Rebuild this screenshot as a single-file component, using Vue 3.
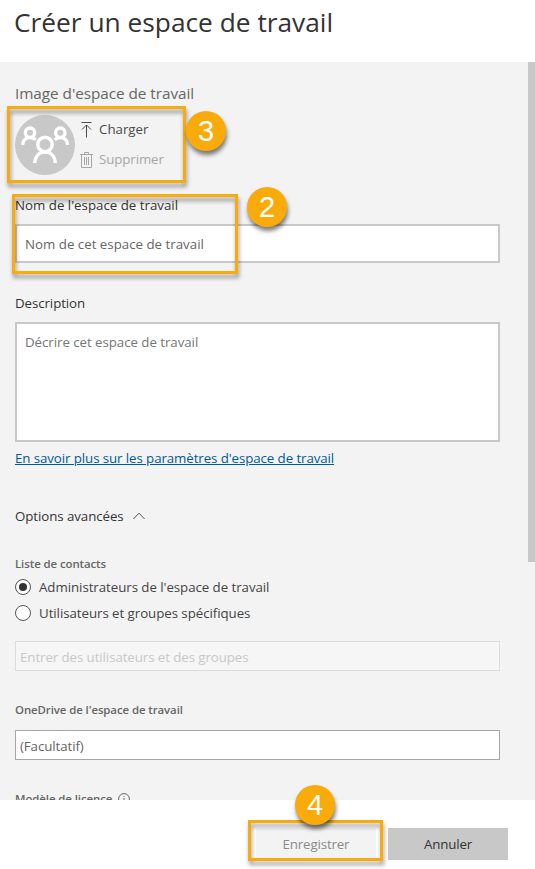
<script setup>
import { ref } from 'vue'

const contacts = ref('admins')
const contactOptions = [
  { value: 'admins', label: "Administrateurs de l'espace de travail" },
  { value: 'specific', label: 'Utilisateurs et groupes spécifiques' },
]
</script>

<template>
  <div class="dialog">
    <header class="header">
      <h1>Créer un espace de travail</h1>
    </header>

    <main class="body">
      <h2 class="section-title">Image d'espace de travail</h2>
      <div class="picture-row">
        <svg class="avatar" viewBox="0 0 60 60" width="60" height="60">
          <circle cx="30" cy="30" r="30" fill="#c8c8c8" />
          <g fill="none" stroke="#fff" stroke-width="3.4">
            <circle cx="15" cy="17.700" r="4.700" />
            <circle cx="45.300" cy="17.700" r="4.700" />
            <path d="M7.600 29.800C7.900 25.400 10.800 22.600 15 22.600c2.400 0 4.300.8 5.700 2.200" />
            <path d="M52.700 29.800C52.400 25.400 49.500 22.600 45.300 22.600c-2.400 0-4.300.8-5.700 2.200" />
            <circle cx="30" cy="29.400" r="7.200" />
            <path d="M19.800 48C20.200 41 24.400 37 30 37s9.900 4 10.300 11" />
          </g>
        </svg>
        <div class="picture-actions">
          <div class="action">
            <svg width="14" height="18" viewBox="0 0 14 18" fill="none" stroke="#4a4a4a">
              <path d="M1.500 2.500h10M6.500 17.500V5M2 9.500L6.500 5l4.500 4.500" />
            </svg>
            <span>Charger</span>
          </div>
          <div class="action disabled">
            <svg width="14" height="18" viewBox="0 0 14 18" fill="none" stroke="#a6a6a6">
              <path d="M0 4.500h13M4.500 4.500v-2h4v2M1.500 4.500v13h10V4.500M4.500 7v8M6.500 7v8M8.500 7v8" />
            </svg>
            <span>Supprimer</span>
          </div>
        </div>
      </div>

      <div class="label name-label">Nom de l'espace de travail</div>
      <div class="box name-box">Nom de cet espace de travail</div>

      <div class="label desc-label">Description</div>
      <div class="box desc-box">Décrire cet espace de travail</div>
      <a class="link">En savoir plus sur les paramètres d'espace de travail</a>

      <div class="advanced">
        <span>Options avancées</span>
        <svg width="12" height="8" viewBox="0 0 12 8" fill="none" stroke="#555">
          <path d="M.4 7L6 1.200 11.600 7" />
        </svg>
      </div>

      <div class="sub-label contacts-label">Liste de contacts</div>
      <div class="radios">
        <div v-for="o in contactOptions" :key="o.value" class="radio" @click="contacts = o.value">
          <span class="ring"><span v-if="contacts === o.value" class="dot"></span></span>
          <span>{{ o.label }}</span>
        </div>
      </div>
      <div class="field users-field">Entrer des utilisateurs et des groupes</div>

      <div class="sub-label drive-label">OneDrive de l'espace de travail</div>
      <div class="field drive-field">(Facultatif)</div>

      <div class="sub-label license-label">
        <span>Modèle de licence</span>
        <svg width="12" height="12" viewBox="0 0 12 12" fill="none" stroke="#666">
          <circle cx="6" cy="6" r="5.400" />
          <path d="M6 5v4M6 3v1" />
        </svg>
      </div>
      <div class="scrollbar"></div>
    </main>

    <footer class="footer">
      <div class="button save">Enregistrer</div>
      <div class="button cancel">Annuler</div>
    </footer>

    <div class="callout callout-picture"></div>
    <div class="callout callout-name"></div>
    <div class="callout callout-save"></div>
    <div class="badge badge-picture">3</div>
    <div class="badge badge-name">2</div>
    <div class="badge badge-save">4</div>
  </div>
</template>

<style>
body {
  margin: 0;
  background: #fff;
}
</style>

<style scoped>
.dialog {
  position: relative;
  width: 535px;
  height: 869px;
  display: flex;
  flex-direction: column;
  overflow: hidden;
  background: #fff;
  color: #333;
  font-family: 'Open Sans', 'Noto Sans', sans-serif;
  font-size: 13.3px;
  line-height: 20px;
  white-space: nowrap;
}
.dialog * {
  box-sizing: border-box;
}
.header {
  height: 62px;
  padding: 2px 0 0 14px;
}
h1 {
  margin: 0;
  font-size: 26.3px;
  font-weight: 400;
  line-height: 40px;
}
.body {
  position: relative;
  height: 738px;
  padding: 21px 35px 0 15px;
  overflow: hidden;
  background: #f3f3f3;
}
.scrollbar {
  position: absolute;
  top: 0;
  right: 0;
  width: 7px;
  height: 500px;
  background: #c8c8c8;
}
.section-title {
  margin: 0;
  font-size: 15.3px;
  font-weight: 400;
  letter-spacing: -0.04px;
  color: #666;
}
.picture-row {
  display: flex;
  gap: 5px;
  height: 60px;
  margin-top: 12px;
}
.picture-actions {
  display: flex;
  flex-direction: column;
  gap: 10px;
  padding-top: 4px;
}
.action {
  display: flex;
  align-items: center;
  gap: 5px;
  height: 20px;
  color: #4a4a4a;
}
.action.disabled {
  color: #a6a6a6;
  letter-spacing: -0.1px;
}
.name-label {
  margin-top: 20px;
}
.desc-label {
  margin-top: 30px;
  letter-spacing: -0.08px;
}
.box {
  margin-top: 9px;
  padding: 8px;
  border: 2px solid #c8c8c8;
  background: #fff;
  color: #666;
}
.name-box {
  height: 39px;
}
.desc-box {
  height: 120px;
  letter-spacing: -0.05px;
  color: #767676;
}
.link {
  display: block;
  margin-top: 6px;
  letter-spacing: -0.085px;
  color: #005a9e;
  text-decoration: underline;
}
.advanced {
  display: flex;
  align-items: center;
  gap: 9px;
  margin-top: 38px;
  letter-spacing: -0.07px;
}
.sub-label {
  position: relative;
  top: 1px;
  color: #666;
  font-size: 11.4px;
  font-weight: 600;
  letter-spacing: -0.07px;
}
.contacts-label {
  margin-top: 27px;
}
.radios {
  display: flex;
  flex-direction: column;
  gap: 6px;
  margin-top: 4px;
}
.radio {
  display: flex;
  align-items: center;
  gap: 8px;
  height: 20px;
  letter-spacing: -0.055px;
  color: #444;
}
.ring {
  display: flex;
  align-items: center;
  justify-content: center;
  width: 16px;
  height: 16px;
  border: 1px solid #555;
  border-radius: 50%;
  background: #fff;
}
.dot {
  width: 8px;
  height: 8px;
  border-radius: 50%;
  background: #333;
}
.field {
  height: 30px;
  padding: 5px 4px;
  border: 1px solid #a6a6a6;
  background: #fff;
  letter-spacing: -0.08px;
  color: #666;
}
.users-field {
  margin-top: 18px;
  border-color: #dcdcdc;
  background: #f6f6f6;
  color: #c8c8c8;
}
.drive-label {
  margin-top: 28px;
}
.drive-field {
  margin-top: 11px;
}
.license-label {
  display: flex;
  align-items: center;
  gap: 6px;
  margin-top: 28px;
}
.footer {
  display: flex;
  justify-content: flex-end;
  gap: 12px;
  padding: 28px 27px 0 0;
}
.button {
  width: 120px;
  height: 32px;
  line-height: 32px;
  letter-spacing: -0.15px;
  text-align: center;
}
.save {
  background: #f3f3f3;
  color: #8a8a8a;
}
.cancel {
  background: #c8c8c8;
  color: #333;
}
.callout {
  position: absolute;
  border: 3px solid #f9ab0b;
  filter: drop-shadow(1px 4px 2px rgba(0, 0, 0, 0.4));
}
.callout-picture {
  left: 7px;
  top: 106px;
  width: 179px;
  height: 77px;
}
.callout-name {
  left: 12px;
  top: 194px;
  width: 226px;
  height: 80px;
}
.callout-save {
  left: 248px;
  top: 820px;
  width: 135px;
  height: 41px;
}
.badge {
  position: absolute;
  width: 40px;
  height: 40px;
  border-radius: 50%;
  background: #f9ab0b;
  box-shadow: 1px 4px 4px rgba(0, 0, 0, 0.5);
  color: #fff;
  font-family: 'Liberation Sans', sans-serif;
  font-size: 29px;
  line-height: 41px;
  text-align: center;
}
.badge-picture {
  left: 186px;
  top: 111px;
}
.badge-name {
  left: 247px;
  top: 187px;
}
.badge-save {
  left: 295px;
  top: 785px;
}
</style>
